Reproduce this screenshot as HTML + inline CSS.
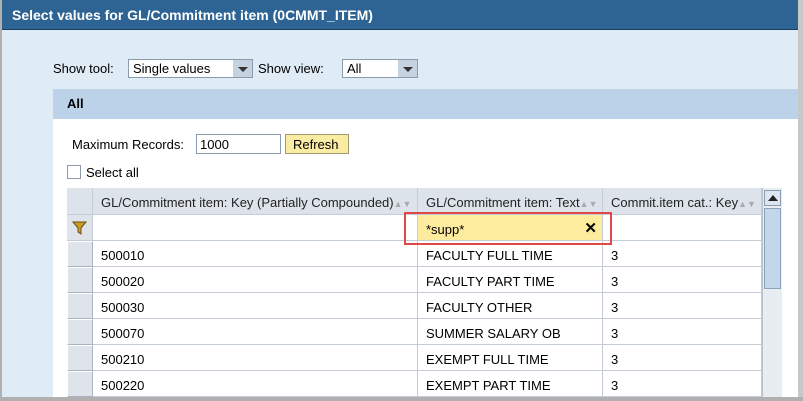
<!DOCTYPE html>
<html><head><style>
*{margin:0;padding:0;box-sizing:border-box}
body{width:803px;height:401px;overflow:hidden;background:#dfebf5;font-family:"Liberation Sans",sans-serif;font-size:13px;color:#000;position:relative}
.a{position:absolute}
.title{left:0;top:0;width:803px;height:30px;background:#2e6494;border-bottom:1px solid #1d3f5e;color:#fff;font-weight:bold;font-size:14px;padding:7px 12px}
.sel{height:19px;border:1px solid #8a9bb0;background:#fff;padding:1px 4px}
.sel b{position:absolute;right:0;top:0;width:19px;height:17px;background:#c5d2e0}
.sel b:after{content:"";position:absolute;left:5px;top:7px;border-left:5px solid transparent;border-right:5px solid transparent;border-top:5px solid #333}
.cell{position:absolute;height:26px;border-right:1px solid #c4ccd6;border-bottom:1px solid #c4ccd6;padding:7px 8px 0;background:#fff;white-space:nowrap}
.sc{background:#dfe4ea;border:1px solid #fff;border-right:1px solid #aab4c0;border-bottom:1px solid #aab4c0}
.hd{background:#dde3ea;color:#222}
</style></head><body>
<div class="a title">Select values for GL/Commitment item (0CMMT_ITEM)</div>
<div class="a" style="left:798px;top:0;width:5px;height:401px;background:#c8c8c8"></div>
<div class="a" style="left:0;top:397px;width:803px;height:4px;background:#b0b0b0;z-index:5"></div>
<div class="a" style="left:0;top:0;width:2px;height:401px;background:#b0b0b0"></div>
<div class="a" style="left:53px;top:61px">Show tool:</div>
<div class="a sel" style="left:128px;top:59px;width:125px">Single values<b></b></div>
<div class="a" style="left:258px;top:61px">Show view:</div>
<div class="a sel" style="left:342px;top:59px;width:76px">All<b></b></div>
<div class="a" style="left:53px;top:89px;width:745px;height:30px;background:#bcd2e8;font-weight:bold;padding:7px 14px">All</div>
<div class="a" style="left:53px;top:119px;width:745px;height:278px;background:#fff"></div>
<div class="a" style="left:72px;top:137px">Maximum Records:</div>
<div class="a" style="left:196px;top:134px;width:85px;height:20px;border:1px solid #8a9bb0;padding:2px 3px">1000</div>
<div class="a" style="left:285px;top:134px;width:64px;height:20px;border:1px solid #a09a70;background:#fbeca4;padding:2px 7px">Refresh</div>
<div class="a" style="left:67px;top:165px;width:14px;height:14px;border:1px solid #8a9bb0;background:#fff"></div>
<div class="a" style="left:86px;top:165px">Select all</div>
<div class="a" style="left:67px;top:188px;width:715px;height:209px;border:1px solid #b8c0ca;border-bottom:none"></div>
<div class="cell hd" style="left:67px;top:188px;width:26px;height:27px"></div>
<div class="cell hd" style="left:93px;top:188px;width:325px;height:27px">GL/Commitment item: Key (Partially Compounded)<span style="color:#aaa;font-size:9px">▲▼</span></div>
<div class="cell hd" style="left:418px;top:188px;width:185px;height:27px">GL/Commitment item: Text<span style="color:#aaa;font-size:9px">▲▼</span></div>
<div class="cell hd" style="left:603px;top:188px;width:159px;height:27px">Commit.item cat.: Key<span style="color:#aaa;font-size:9px">▲▼</span></div>
<div class="cell" style="left:67px;top:215px;width:26px;background:#dfe4ea"><svg class="a" style="left:5px;top:6px" width="16" height="14"><path d="M1 1h13l-5 6v6l-3-2V7z" fill="#c89a2a" stroke="#6a5010"/></svg></div>
<div class="cell" style="left:93px;top:215px;width:325px"></div>
<div class="cell" style="left:418px;top:215px;width:185px;background:#fdeb9e">*supp*<span style="position:absolute;right:5px;top:4px;font-size:15px;font-weight:bold">✕</span></div>
<div class="cell" style="left:603px;top:215px;width:159px"></div>
<div class="a" style="left:67px;top:241px">
<div class="cell sc" style="left:0;top:0;width:26px"></div><div class="cell" style="left:26px;top:0;width:325px">500010</div><div class="cell" style="left:351px;top:0;width:185px">FACULTY FULL TIME</div><div class="cell" style="left:536px;top:0;width:159px">3</div>
<div class="cell sc" style="left:0;top:26px;width:26px"></div><div class="cell" style="left:26px;top:26px;width:325px">500020</div><div class="cell" style="left:351px;top:26px;width:185px">FACULTY PART TIME</div><div class="cell" style="left:536px;top:26px;width:159px">3</div>
<div class="cell sc" style="left:0;top:52px;width:26px"></div><div class="cell" style="left:26px;top:52px;width:325px">500030</div><div class="cell" style="left:351px;top:52px;width:185px">FACULTY OTHER</div><div class="cell" style="left:536px;top:52px;width:159px">3</div>
<div class="cell sc" style="left:0;top:78px;width:26px"></div><div class="cell" style="left:26px;top:78px;width:325px">500070</div><div class="cell" style="left:351px;top:78px;width:185px">SUMMER SALARY OB</div><div class="cell" style="left:536px;top:78px;width:159px">3</div>
<div class="cell sc" style="left:0;top:104px;width:26px"></div><div class="cell" style="left:26px;top:104px;width:325px">500210</div><div class="cell" style="left:351px;top:104px;width:185px">EXEMPT FULL TIME</div><div class="cell" style="left:536px;top:104px;width:159px">3</div>
<div class="cell sc" style="left:0;top:130px;width:26px"></div><div class="cell" style="left:26px;top:130px;width:325px">500220</div><div class="cell" style="left:351px;top:130px;width:185px">EXEMPT PART TIME</div><div class="cell" style="left:536px;top:130px;width:159px">3</div>
</div>
<div class="a" style="left:404px;top:212px;width:208px;height:33px;border:2px solid #e04848;z-index:4"></div>
<div class="a" style="left:762px;top:188px;width:20px;height:209px;background:#e8edf2;border-left:1px solid #b8c0ca"></div>
<div class="a" style="left:764px;top:190px;width:17px;height:16px;border:1px solid #8a9bb0;background:#dce6f0"><div style="position:absolute;left:3px;top:4px;border-left:5px solid transparent;border-right:5px solid transparent;border-bottom:6px solid #222"></div></div>
<div class="a" style="left:764px;top:208px;width:17px;height:81px;border:1px solid #8aa4c0;background:#c3d6ea"></div>
</body></html>
